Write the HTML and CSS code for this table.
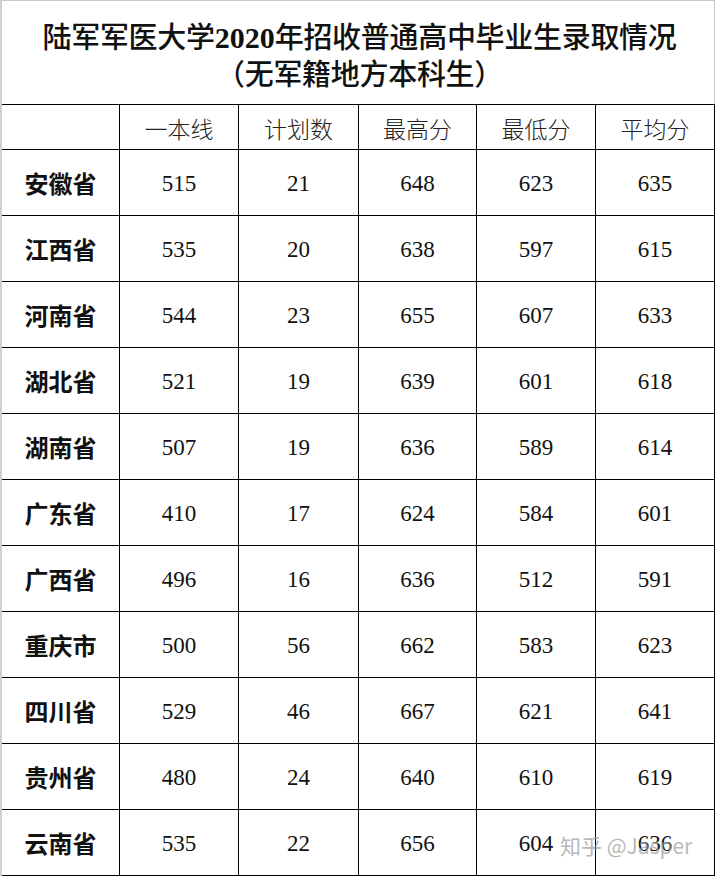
FILE: index.html
```html
<!DOCTYPE html>
<html lang="zh-CN">
<head>
<meta charset="utf-8">
<title>陆军军医大学2020年招收普通高中毕业生录取情况</title>
<link rel="stylesheet" href="styles.css">
</head>
<body>
<div class="sheet">
  <div class="title">
    <div class="title-line">陆军军医大学<span class="num">2020</span>年招收普通高中毕业生录取情况</div>
    <div class="title-line">（无军籍地方本科生）</div>
  </div>
  <div class="grid">
    <div class="cell head"></div>
    <div class="cell head">一本线</div>
    <div class="cell head">计划数</div>
    <div class="cell head">最高分</div>
    <div class="cell head">最低分</div>
    <div class="cell head">平均分</div>

    <div class="cell prov">安徽省</div><div class="cell num">515</div><div class="cell num">21</div><div class="cell num">648</div><div class="cell num">623</div><div class="cell num">635</div>
    <div class="cell prov">江西省</div><div class="cell num">535</div><div class="cell num">20</div><div class="cell num">638</div><div class="cell num">597</div><div class="cell num">615</div>
    <div class="cell prov">河南省</div><div class="cell num">544</div><div class="cell num">23</div><div class="cell num">655</div><div class="cell num">607</div><div class="cell num">633</div>
    <div class="cell prov">湖北省</div><div class="cell num">521</div><div class="cell num">19</div><div class="cell num">639</div><div class="cell num">601</div><div class="cell num">618</div>
    <div class="cell prov">湖南省</div><div class="cell num">507</div><div class="cell num">19</div><div class="cell num">636</div><div class="cell num">589</div><div class="cell num">614</div>
    <div class="cell prov">广东省</div><div class="cell num">410</div><div class="cell num">17</div><div class="cell num">624</div><div class="cell num">584</div><div class="cell num">601</div>
    <div class="cell prov">广西省</div><div class="cell num">496</div><div class="cell num">16</div><div class="cell num">636</div><div class="cell num">512</div><div class="cell num">591</div>
    <div class="cell prov">重庆市</div><div class="cell num">500</div><div class="cell num">56</div><div class="cell num">662</div><div class="cell num">583</div><div class="cell num">623</div>
    <div class="cell prov">四川省</div><div class="cell num">529</div><div class="cell num">46</div><div class="cell num">667</div><div class="cell num">621</div><div class="cell num">641</div>
    <div class="cell prov">贵州省</div><div class="cell num">480</div><div class="cell num">24</div><div class="cell num">640</div><div class="cell num">610</div><div class="cell num">619</div>
    <div class="cell prov">云南省</div><div class="cell num">535</div><div class="cell num">22</div><div class="cell num">656</div><div class="cell num">604</div><div class="cell num">636</div>
  </div>
  <div class="watermark">知乎 @Jasper</div>
</div>
</body>
</html>
```

FILE: styles.css
```css
html, body {
  margin: 0;
  padding: 0;
  background: #fff;
}

.sheet {
  position: relative;
  width: 715px;
  height: 876px;
  box-sizing: border-box;
  border-left: 2px solid #cfcfcf;
  border-top: 1px solid #c8c8c8;
  overflow: hidden;
}

.title {
  height: 103px;
  box-sizing: border-box;
  border-right: 1px solid #c8c8c8;
  display: flex;
  flex-direction: column;
  align-items: center;
  justify-content: center;
  padding-top: 1px;
  font-family: "Noto Sans CJK SC", sans-serif;
  font-weight: 500;
  font-size: 29px;
  line-height: 34px;
  color: #111;
  letter-spacing: -0.3px;
}

.title-line {
  white-space: nowrap;
  padding-left: 3px;
}

.title .num {
  font-family: "Liberation Serif", serif;
  font-weight: 700;
  font-size: 30px;
  letter-spacing: 0;
}

.grid {
  display: grid;
  grid-template-columns: 118px 119px 120px 118px 119px 119px;
  grid-template-rows: 45px;
  grid-auto-rows: 66px;
  border-top: 1px solid #000;
}

.cell {
  box-sizing: border-box;
  border-right: 1px solid #000;
  border-bottom: 1px solid #000;
  display: flex;
  align-items: center;
  justify-content: center;
  color: #111;
}

.head {
  font-family: "Noto Sans CJK SC", sans-serif;
  font-weight: 300;
  font-size: 23px;
  padding-top: 1px;
  color: #222;
}

.prov {
  font-family: "Noto Sans CJK SC", sans-serif;
  font-weight: 700;
  font-size: 24px;
  color: #111;
}

.cell.num {
  font-family: "Liberation Serif", serif;
  font-size: 23px;
  padding-top: 2px;
  color: #111;
}

.watermark {
  position: absolute;
  left: 558px;
  top: 829px;
  font-family: "Noto Sans CJK SC", sans-serif;
  font-size: 21px;
  color: rgba(160, 160, 160, 0.75);
  white-space: nowrap;
}
```
